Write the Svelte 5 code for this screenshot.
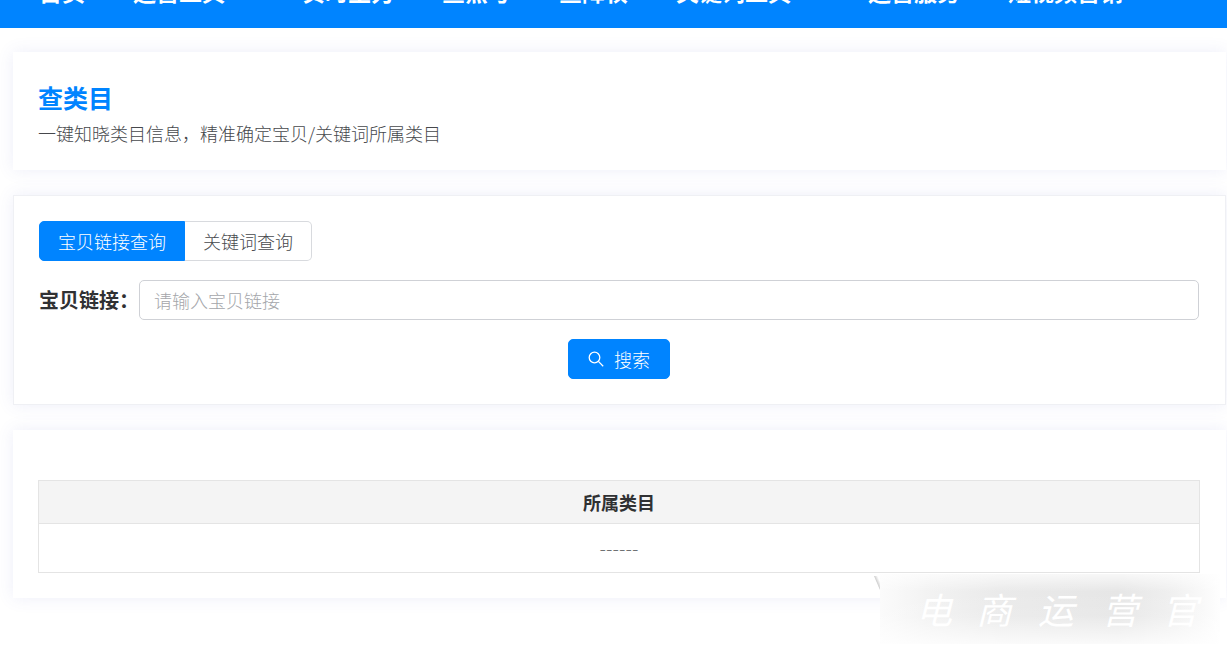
<script>
  const links = [
    { text: '首页' },
    { text: '运营工具', menu: true },
    { text: '实时主力' },
    { text: '查黑号' },
    { text: '查降权' },
    { text: '关键词工具', menu: true },
    { text: '运营服务' },
    { text: '短视频营销' }
  ];
  const modes = ['宝贝链接查询', '关键词查询'];
  let mode = $state(0);
  let query = $state('');
</script>

<header>
  <nav>
    {#each links as link}
      <a href="#top" class:menu={link.menu}>{link.text}</a>
    {/each}
  </nav>
</header>

<main>
  <section class="intro">
    <h1>查类目</h1>
    <p>一键知晓类目信息，精准确定宝贝/关键词所属类目</p>
  </section>

  <section class="search">
    <div class="tabs">
      {#each modes as name, i}
        <button type="button" class:active={mode === i} onclick={() => (mode = i)}>{name}</button>
      {/each}
    </div>
    <div class="field">
      <label for="link">宝贝链接：</label>
      <input id="link" type="text" placeholder="请输入宝贝链接" bind:value={query} />
    </div>
    <button type="button" class="submit">
      <svg viewBox="0 0 16 16" width="16" height="16" aria-hidden="true">
        <circle cx="6.5" cy="6.5" r="5.3" />
        <path d="M10.4 10.4 15.2 15.2" />
      </svg>
      搜索
    </button>
  </section>

  <section class="result">
    <table>
      <thead><tr><th>所属类目</th></tr></thead>
      <tbody><tr><td>------</td></tr></tbody>
    </table>
  </section>
</main>

<div class="watermark">
  <svg viewBox="0 0 347 76" width="347" height="76" role="img" aria-label="电商运营官">
    <defs>
      <linearGradient id="haze" x1="0" y1="0" x2="1" y2="0">
        <stop offset="0" stop-color="#fbfbfb" />
        <stop offset="0.15" stop-color="#f2f2f2" />
        <stop offset="0.35" stop-color="#eaeaea" />
        <stop offset="0.7" stop-color="#e6e6e6" />
        <stop offset="0.85" stop-color="#efefef" />
        <stop offset="1" stop-color="#fefefe" />
      </linearGradient>
      <linearGradient id="fade" x1="0" y1="0" x2="0" y2="1">
        <stop offset="0" stop-color="#fff" stop-opacity="0.7" />
        <stop offset="0.25" stop-color="#fff" stop-opacity="0" />
        <stop offset="0.6" stop-color="#fff" stop-opacity="0.1" />
        <stop offset="1" stop-color="#fff" stop-opacity="0.8" />
      </linearGradient>
      <linearGradient id="corner" x1="0" y1="1" x2="1" y2="0">
        <stop offset="0.2" stop-color="#fff" />
        <stop offset="0.5" stop-color="#cccccc" />
        <stop offset="0.8" stop-color="#fff" />
      </linearGradient>
    </defs>
    <rect x="7" y="3" width="340" height="70" fill="url(#haze)" />
    <rect x="7" y="3" width="340" height="70" fill="url(#fade)" />
    <path d="M1 5h6v14z" fill="url(#corner)" />
    <g class="script">
      <text x="43" y="53">电</text>
      <text x="103" y="53">商</text>
      <text x="165" y="53">运</text>
      <text x="229" y="53">营</text>
      <text x="289" y="53">官</text>
    </g>
  </svg>
</div>

<style>
  :global(body) {
    background: #fff;
    color: #46484c;
    font-family: 'Noto Sans CJK SC', sans-serif;
    font-size: 18px;
    font-weight: 300;
  }
  header {
    height: 28px;
    overflow: hidden;
    background: #0084ff;
  }
  nav {
    display: flex;
    gap: 48px;
    padding-left: 39px;
    margin-top: -26px;
  }
  nav a {
    flex: none;
    color: #fff;
    font-size: 23px;
    font-weight: 700;
    line-height: 34px;
    text-decoration: none;
  }
  nav a.menu {
    padding-right: 29px;
  }
  main {
    display: flex;
    flex-direction: column;
    gap: 25px;
    padding: 24px 1px 48px 13px;
  }
  section {
    box-sizing: border-box;
    padding: 25px 26px 25px 25px;
    background: #fff;
    box-shadow: 0 0 16px rgba(80, 90, 200, 0.1);
  }
  .intro {
    padding-bottom: 21px;
  }
  h1 {
    margin: 0;
    color: #0084ff;
    font-size: 25px;
    line-height: 40px;
  }
  p {
    margin: 0;
    line-height: 32px;
  }
  .search {
    display: flex;
    flex-direction: column;
    gap: 19px;
    border: 1px solid #eff0f4;
  }
  .tabs {
    display: flex;
  }
  button {
    box-sizing: border-box;
    height: 40px;
    padding: 0 18px;
    border: 1px solid #d8dade;
    background: #fff;
    color: #46484c;
    font: inherit;
    line-height: 36px;
  }
  .tabs button:first-child {
    border-radius: 5px 0 0 5px;
  }
  .tabs button:last-child {
    border-left: 0;
    border-radius: 0 5px 5px 0;
  }
  .tabs .active,
  .submit {
    border-color: #0084ff;
    background: #0084ff;
    color: #fff;
  }
  .field {
    display: flex;
    align-items: center;
  }
  label {
    width: 100px;
    color: #303133;
    font-size: 20px;
    font-weight: 700;
    line-height: 40px;
    white-space: nowrap;
  }
  input {
    box-sizing: border-box;
    flex: 1;
    min-width: 0;
    height: 40px;
    padding: 0 14px;
    border: 1px solid #cfd1d6;
    border-radius: 5px;
    outline: 0;
    color: #46484c;
    font: inherit;
  }
  input::placeholder {
    color: #a4a6aa;
    opacity: 1;
  }
  .submit {
    display: flex;
    align-items: center;
    align-self: center;
    gap: 10px;
    padding: 0 19px;
    border-radius: 5px;
  }
  .submit svg {
    fill: none;
    stroke: #fff;
    stroke-width: 1.3;
  }
  .result {
    padding-top: 50px;
  }
  table {
    width: 100%;
    border: 1px solid #e4e4e4;
    border-collapse: collapse;
  }
  th {
    height: 42px;
    padding: 0;
    border-bottom: 1px solid #e4e4e4;
    background: #f4f4f4;
    color: #303133;
    font-weight: 700;
  }
  td {
    height: 48px;
    padding: 0;
    font-family: 'DejaVu Sans', 'Noto Sans CJK SC', sans-serif;
    text-align: center;
  }
  .watermark {
    position: absolute;
    right: 7px;
    top: 571px;
    line-height: 0;
  }
  .script {
    fill: #fff;
    font-size: 36px;
    font-style: italic;
    font-weight: 400;
  }
</style>
